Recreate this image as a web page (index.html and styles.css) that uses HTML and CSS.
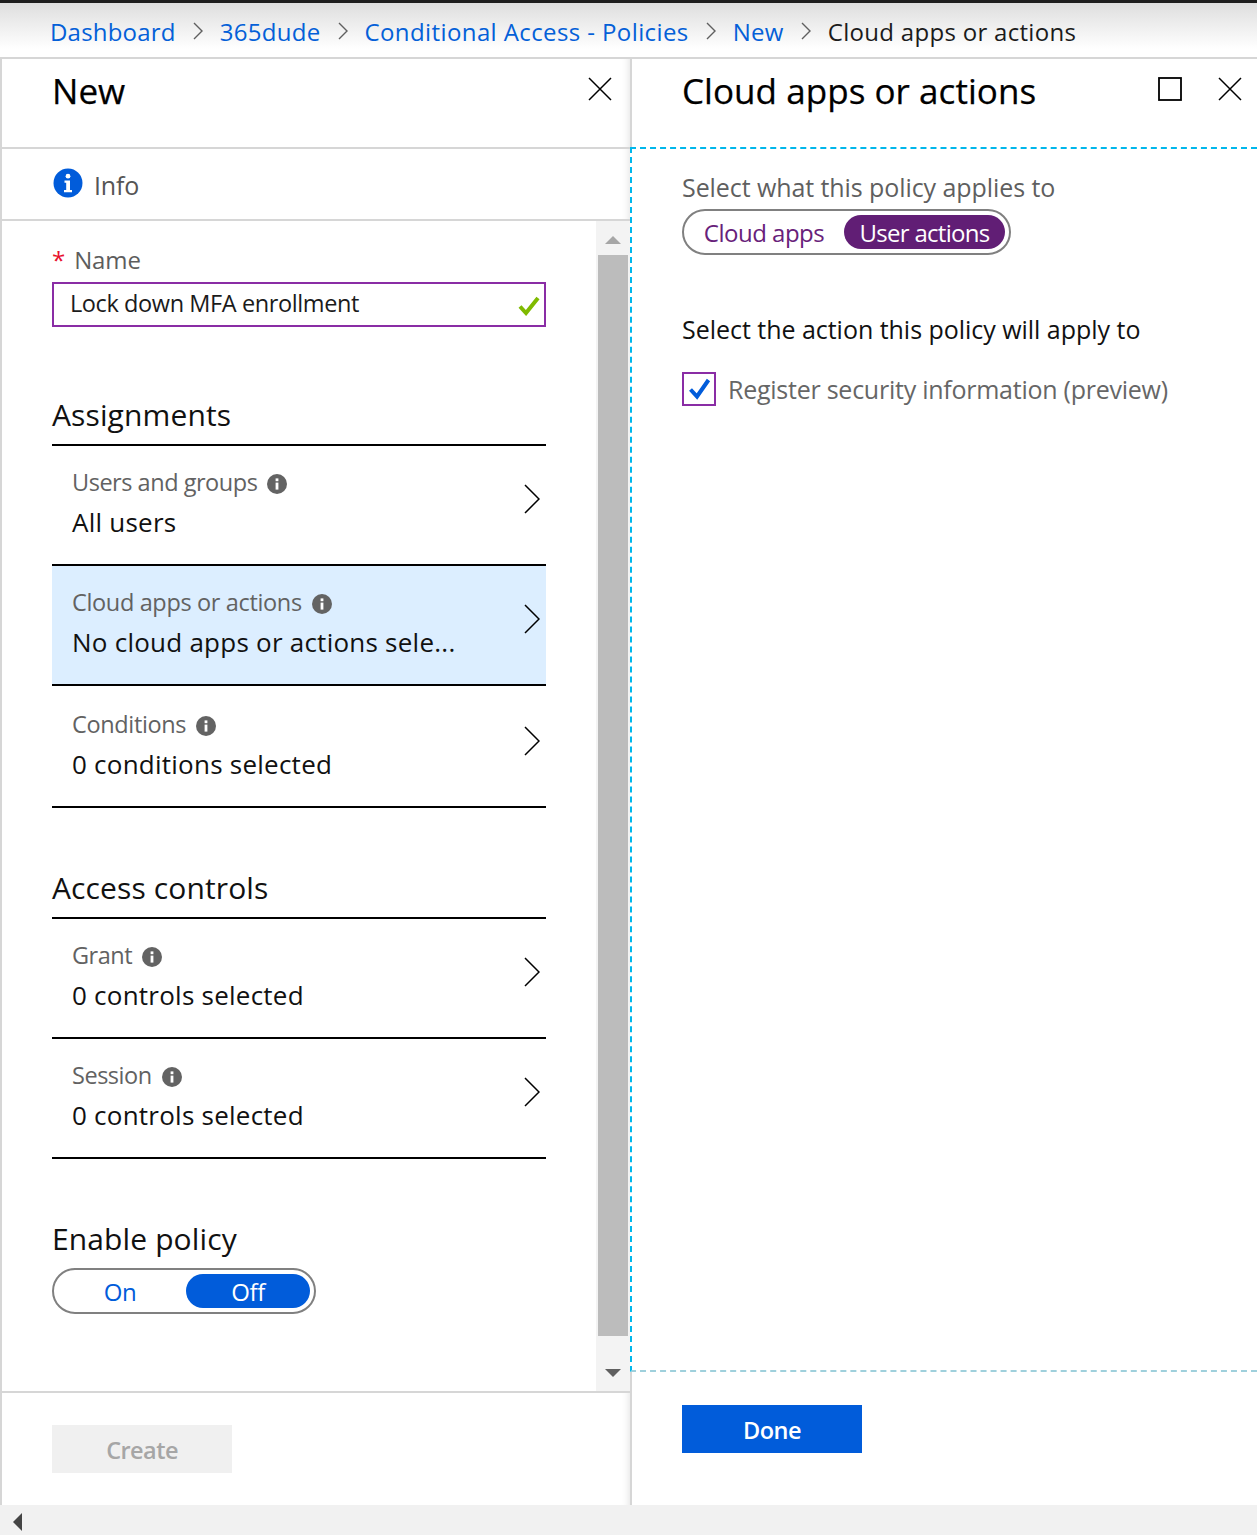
FILE: index.html
```html
<!DOCTYPE html>
<html lang="en">
<head>
<meta charset="utf-8">
<title>Cloud apps or actions</title>
<link rel="stylesheet" href="styles.css">
</head>
<body>
<div class="app">
  <nav class="crumbs">
    <a class="crumb crumb-first">Dashboard</a>
    <svg class="crumb-sep" viewBox="0 0 12 18"><path d="M2 1l8 8-8 8"/></svg>
    <a class="crumb">365dude</a>
    <svg class="crumb-sep" viewBox="0 0 12 18"><path d="M2 1l8 8-8 8"/></svg>
    <a class="crumb crumb-long">Conditional Access - Policies</a>
    <svg class="crumb-sep" viewBox="0 0 12 18"><path d="M2 1l8 8-8 8"/></svg>
    <a class="crumb">New</a>
    <svg class="crumb-sep" viewBox="0 0 12 18"><path d="M2 1l8 8-8 8"/></svg>
    <span class="crumb-current">Cloud apps or actions</span>
  </nav>
  <main class="blades">
    <section class="blade blade-left">
      <header class="blade-head">
        <h1 class="blade-title">New</h1>
        <svg class="win-icon" viewBox="0 0 24 24"><path d="M1 1l22 22M23 1L1 23"/></svg>
      </header>
      <div class="info-row">
        <svg class="info-big" viewBox="0 0 30 30"><circle cx="15" cy="15" r="14.5" fill="#015cda"/><circle cx="15" cy="8.2" r="2.4" fill="#fff"/><path d="M11.5 12.5H17V22h2v2.2h-8V22h2.2v-7.3h-1.7z" fill="#fff"/></svg>
        <span class="info-text">Info</span>
      </div>
      <div class="blade-scroll">
        <div class="form">
          <label class="field-label"><span class="req">*</span>Name</label>
          <div class="input">
            <span class="input-text">Lock down MFA enrollment</span>
            <svg class="input-check" viewBox="0 0 22 20"><path d="M2 10.5l6 6.5L20 2"/></svg>
          </div>
          <h2 class="section-title first">Assignments</h2>
          <a class="row">
            <div class="row-text"><div class="row-label">Users and groups<svg class="info-small" viewBox="0 0 20 20"><circle cx="10" cy="10" r="10"/><rect x="8.6" y="8.6" width="2.8" height="7" fill="#fff"/><rect x="8.6" y="4.4" width="2.8" height="2.8" fill="#fff"/></svg></div><div class="row-value">All users</div></div>
            <svg class="chev" viewBox="0 0 16 30"><path d="M1 1l14 14L1 29"/></svg>
          </a>
          <a class="row row-active">
            <div class="row-text"><div class="row-label">Cloud apps or actions<svg class="info-small" viewBox="0 0 20 20"><circle cx="10" cy="10" r="10"/><rect x="8.6" y="8.6" width="2.8" height="7" fill="#fff"/><rect x="8.6" y="4.4" width="2.8" height="2.8" fill="#fff"/></svg></div><div class="row-value">No cloud apps or actions sele...</div></div>
            <svg class="chev" viewBox="0 0 16 30"><path d="M1 1l14 14L1 29"/></svg>
          </a>
          <a class="row row-tall">
            <div class="row-text"><div class="row-label">Conditions<svg class="info-small" viewBox="0 0 20 20"><circle cx="10" cy="10" r="10"/><rect x="8.6" y="8.6" width="2.8" height="7" fill="#fff"/><rect x="8.6" y="4.4" width="2.8" height="2.8" fill="#fff"/></svg></div><div class="row-value">0 conditions selected</div></div>
            <svg class="chev" viewBox="0 0 16 30"><path d="M1 1l14 14L1 29"/></svg>
          </a>
          <h2 class="section-title second">Access controls</h2>
          <a class="row">
            <div class="row-text"><div class="row-label">Grant<svg class="info-small" viewBox="0 0 20 20"><circle cx="10" cy="10" r="10"/><rect x="8.6" y="8.6" width="2.8" height="7" fill="#fff"/><rect x="8.6" y="4.4" width="2.8" height="2.8" fill="#fff"/></svg></div><div class="row-value">0 controls selected</div></div>
            <svg class="chev" viewBox="0 0 16 30"><path d="M1 1l14 14L1 29"/></svg>
          </a>
          <a class="row">
            <div class="row-text"><div class="row-label">Session<svg class="info-small" viewBox="0 0 20 20"><circle cx="10" cy="10" r="10"/><rect x="8.6" y="8.6" width="2.8" height="7" fill="#fff"/><rect x="8.6" y="4.4" width="2.8" height="2.8" fill="#fff"/></svg></div><div class="row-value">0 controls selected</div></div>
            <svg class="chev" viewBox="0 0 16 30"><path d="M1 1l14 14L1 29"/></svg>
          </a>
          <h2 class="section-title third">Enable policy</h2>
          <div class="toggle toggle-policy">
            <span class="opt opt-on">On</span>
            <span class="opt opt-off">Off</span>
          </div>
        </div>
        <div class="scrollbar">
          <span class="arrow-up"></span>
          <div class="thumb"></div>
          <span class="arrow-down"></span>
        </div>
      </div>
      <footer class="blade-foot">
        <button class="btn btn-disabled">Create</button>
      </footer>
    </section>
    <section class="blade blade-right">
      <header class="blade-head blade-head-right">
        <h1 class="blade-title">Cloud apps or actions</h1>
        <svg class="win-icon win-max" viewBox="0 0 24 24"><rect x="1" y="1" width="22" height="22"/></svg>
        <svg class="win-icon" viewBox="0 0 24 24"><path d="M1 1l22 22M23 1L1 23"/></svg>
      </header>
      <div class="focus-area">
        <div class="muted-label">Select what this policy applies to</div>
        <div class="toggle toggle-scope">
          <span class="opt opt-cloud">Cloud apps</span>
          <span class="opt opt-user">User actions</span>
        </div>
        <div class="action-label">Select the action this policy will apply to</div>
        <div class="check-row">
          <span class="checkbox"><svg viewBox="0 0 24 24"><path d="M3.5 12.5l6.5 7L21.5 3"/></svg></span>
          <span class="check-text">Register security information (preview)</span>
        </div>
      </div>
      <footer class="blade-foot blade-foot-right">
        <button class="btn btn-primary">Done</button>
      </footer>
    </section>
  </main>
  <div class="hscroll"><span class="arrow-left"></span></div>
</div>
</body>
</html>
```
FILE: styles.css
```css
* { box-sizing: border-box; }
html, body { margin: 0; padding: 0; background: #fff; }
body { font-family: "Open Sans", "Noto Sans", "Liberation Sans", sans-serif; color: #000; }
.app { width: 1257px; height: 1535px; display: flex; flex-direction: column; overflow: hidden; }

.crumbs { height: 59px; flex: none; display: flex; align-items: center; padding: 2px 0 0 50px; border-top: 3px solid #1e1e1e; border-bottom: 2px solid #d6d6d6; background: linear-gradient(#dedede, #fff 85%); font-size: 24px; letter-spacing: .3px; }
.crumb { color: #0460d8; }
.crumb-first { letter-spacing: .2px; }
.crumb-long { letter-spacing: .4px; }
.crumb-current { color: #1b1b1b; }
.crumb-sep { width: 12px; height: 18px; margin: 0 16px 0 16px; fill: none; stroke: #5f5f5f; stroke-width: 1.4; }

.blades { flex: 1; display: flex; min-height: 0; }
.blade { display: flex; flex-direction: column; min-height: 0; }
.blade-left { width: 630px; border-left: 2px solid #d6d6d6; box-shadow: inset -8px 0 8px -8px #dcdcdc; }
.blade-right { width: 627px; }

.blade-head { height: 90px; flex: none; display: flex; align-items: flex-start; padding: 17px 18px 0 50px; border-bottom: 2px solid #d6d6d6; }
.blade-title { margin: 0; flex: 1; font-size: 35px; line-height: 30px; font-weight: 400; letter-spacing: .05px; -webkit-text-stroke: .25px #000; }
.win-icon { width: 24px; height: 24px; flex: none; fill: none; stroke: #000; stroke-width: 1.5; margin-top: 1px; }
.blade-head-right { height: 88px; padding: 17px 15px 0 50px; border-left: 2px solid #d6d6d6; border-bottom: 0; }
.win-max { margin-right: 36px; stroke-width: 1.8; }

.info-row { height: 72px; flex: none; display: flex; align-items: center; padding-left: 51px; border-bottom: 2px solid #d6d6d6; }
.info-big { width: 30px; height: 30px; margin-top: -3px; }
.info-text { margin-left: 11px; margin-top: 2px; font-size: 25px; letter-spacing: -.2px; color: #555; }

.blade-scroll { height: 1172px; flex: none; display: flex; border-bottom: 2px solid #d6d6d6; }
.form { width: 594px; flex: none; padding: 22px 50px 0 50px; }
.field-label { display: block; height: 39px; font-size: 24px; line-height: 33px; letter-spacing: -.1px; color: #5d5d5d; }
.req { color: #e8112d; margin-right: 9px; font-size: 24px; }
.input { height: 45px; display: flex; align-items: center; justify-content: space-between; padding: 0 4px 0 16px; border: 2px solid #8a2da5; font-size: 23.5px; letter-spacing: -.4px; color: #1b1b1b; }
.input-text { padding-bottom: 3px; }
.input-check { width: 22px; height: 20px; margin-top: 2px; fill: none; stroke: #7fba00; stroke-width: 4; }

.section-title { margin: 0; font-size: 30px; font-weight: 400; letter-spacing: .12px; border-bottom: 2px solid #000; color: #111; }
.section-title.first { height: 48px; line-height: 34px; margin-top: 71px; }
.section-title.second { height: 47px; line-height: 32px; margin-top: 64px; }
.section-title.third { height: 46px; line-height: 34px; margin-top: 63px; border-bottom: 0; }

.row { display: flex; align-items: flex-start; height: 120px; padding: 16px 6px 0 20px; border-bottom: 2px solid #000; }
.row-tall { height: 122px; padding-top: 18px; }
.row-active { background: #dceeff; }
.row-text { flex: 1; min-width: 0; }
.row-label { display: flex; align-items: center; height: 40px; font-size: 23.5px; letter-spacing: -.47px; color: #626262; }
.row-active .row-label { letter-spacing: -.35px; }
.row-tall .row-label { letter-spacing: -.35px; }
.row-value { height: 40px; line-height: 40px; font-size: 26px; letter-spacing: .24px; color: #111; white-space: nowrap; }
.info-small { width: 20px; height: 20px; margin-left: 10px; margin-top: 3px; fill: #636363; }
.chev { width: 16px; height: 30px; flex: none; margin-top: 22px; fill: none; stroke: #000; stroke-width: 1.5; }

.toggle { display: flex; align-items: center; height: 46px; border: 2px solid #808080; border-radius: 23px; background: #fff; }
.toggle-policy { width: 264px; font-size: 24px; }
.opt { display: flex; align-items: center; justify-content: center; height: 34px; border-radius: 17px; letter-spacing: -.4px; }
.opt-on { width: 132px; color: #015cda; }
.opt-off { width: 124px; color: #fff; background: #015cda; }

.scrollbar { width: 34px; flex: none; display: flex; flex-direction: column; align-items: center; background: #f3f3f3; }
.thumb { width: 30px; height: 1081px; margin-top: 11px; background: #bcbcbc; }
.arrow-up { width: 0; height: 8px; margin-top: 15px; border: 8px solid transparent; border-top: 0; border-bottom: 8px solid #a6a6a6; }
.arrow-down { width: 0; height: 8px; margin-top: 33px; border: 8px solid transparent; border-bottom: 0; border-top: 8px solid #5f5f5f; }

.blade-foot { flex: 1; padding: 32px 0 0 50px; }
.btn { display: block; width: 180px; height: 48px; border: 0; font-family: inherit; font-size: 23.5px; font-weight: 600; letter-spacing: -.55px; padding: 2px 0 0; }
.btn-disabled { background: #f0f0f0; color: #a6a6a6; }
.btn-primary { background: #015cda; color: #fff; }

.focus-area { height: 1225px; flex: none; padding: 22px 0 0 50px; border: 2px dashed #00b7eb; border-right: 0; border-bottom-color: #9fd0dc; }
.muted-label { font-size: 25px; line-height: 33px; letter-spacing: -.08px; color: #5f5f5f; }
.toggle-scope { width: 329px; margin-top: 5px; font-size: 24px; color: #68217a; }
.opt-cloud { width: 160px; color: #68217a; letter-spacing: -.5px; }
.opt-user { width: 161px; color: #fff; background: #611e75; letter-spacing: -.72px; }
.action-label { margin-top: 58px; font-size: 25px; line-height: 33px; letter-spacing: -.03px; color: #111; }
.check-row { display: flex; align-items: center; margin-top: 26px; }
.checkbox { width: 34px; height: 34px; flex: none; display: flex; align-items: center; justify-content: center; border: 2px solid #8a2da5; }
.checkbox svg { width: 24px; height: 24px; fill: none; stroke: #015cda; stroke-width: 4; }
.check-text { margin-left: 12px; font-size: 25px; letter-spacing: -.25px; color: #666; }
.blade-foot-right { padding: 33px 0 0 50px; border-left: 2px solid #d6d6d6; }

.hscroll { height: 30px; flex: none; display: flex; align-items: center; padding: 4px 0 0 13px; background: #f1f1f1; }
.arrow-left { width: 0; height: 0; border: 9px solid transparent; border-left: 0; border-right: 9px solid #444; }
```
